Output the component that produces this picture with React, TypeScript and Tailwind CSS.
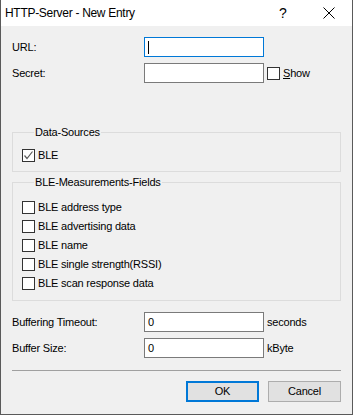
import { ReactNode } from 'react';

const font = { fontFamily: '"Liberation Sans", Arial, sans-serif' };

function Check({ checked = false }: { checked?: boolean }) {
  return (
    <span className="w-[13px] h-[13px] border border-[#333333] bg-white flex items-center justify-center shrink-0">
      {checked && (
        <svg width="11" height="11" viewBox="0 0 11 11">
          <path d="M1.5 5.5 L4 8.5 L9.5 1.5" fill="none" stroke="#5a5a5a" strokeWidth="1.2" />
        </svg>
      )}
    </span>
  );
}

function CheckRow({ label, checked }: { label: string; checked?: boolean }) {
  return (
    <div className="flex items-center h-[13px] gap-[3px]">
      <Check checked={checked} />
      <span>{label}</span>
    </div>
  );
}

function Field({ label, focused, value, after }: { label: string; focused?: boolean; value?: string; after?: ReactNode }) {
  return (
    <div className="flex items-center h-[20px]">
      <span className="w-[132px]">{label}</span>
      <div className={`w-[120px] h-[20px] bg-white border flex items-center pl-[3px] ${focused ? 'border-[#0078d7]' : 'border-[#7a7a7a]'}`}>
        {focused && <span className="w-px h-[13px] bg-black" />}
        {value}
      </div>
      {after}
    </div>
  );
}

export default function App() {
  return (
    <div className="w-[353px] h-[415px] text-[11px] tracking-[-0.2px] text-black flex flex-col border-x border-b border-[#5a5a5a]" style={font}>
      <div className="h-[26px] bg-white flex items-center pl-[4px] text-[12px] tracking-[-0.3px] shrink-0">
        <span className="flex-1">HTTP-Server - New Entry</span>
        <span className="w-[14px] text-[14px] mr-[30px]">?</span>
        <svg width="12" height="12" viewBox="0 0 12 12" className="mr-[17px]">
          <path d="M0.5 0.5 L11.5 11.5 M11.5 0.5 L0.5 11.5" stroke="#000" strokeWidth="1" />
        </svg>
      </div>

      <div className="flex-1 bg-[#f0f0f0] px-[11px] pt-[11px] pb-[10px] flex flex-col">
        <div className="flex flex-col gap-[6px]">
          <Field label="URL:" focused />
          <Field
            label="Secret:"
            after={
              <div className="flex items-center gap-[3px] ml-[3px]">
                <Check />
                <span><u>S</u>how</span>
              </div>
            }
          />
        </div>

        <fieldset className="mt-[42px] border border-[#dcdcdc] px-[9px] pt-[9px] pb-[9px]">
          <legend className="ml-[12px] px-[1px] leading-[15px]">Data-Sources</legend>
          <CheckRow label="BLE" checked />
        </fieldset>

        <fieldset className="mt-[3px] border border-[#dcdcdc] px-[9px] pt-[11px] pb-[10px]">
          <legend className="ml-[12px] px-[1px] leading-[15px]">BLE-Measurements-Fields</legend>
          <div className="flex flex-col gap-[6px]">
            <CheckRow label="BLE address type" />
            <CheckRow label="BLE advertising data" />
            <CheckRow label="BLE name" />
            <CheckRow label="BLE single strength(RSSI)" />
            <CheckRow label="BLE scan response data" />
          </div>
        </fieldset>

        <div className="mt-[11px] flex flex-col gap-[6px]">
          <Field label="Buffering Timeout:" value="0" after={<span className="ml-[3px]">seconds</span>} />
          <Field label="Buffer Size:" value="0" after={<span className="ml-[3px]">kByte</span>} />
        </div>

        <div className="mt-[12px] h-px bg-[#a0a0a0]" />

        <div className="mt-[10px] flex justify-end gap-[9px]">
          <button className="w-[73px] h-[21px] bg-[#e1e1e1] border-2 border-[#0078d7] text-[11px]">OK</button>
          <button className="w-[73px] h-[21px] bg-[#e1e1e1] border border-[#adadad] text-[11px]">Cancel</button>
        </div>
      </div>
    </div>
  );
}
